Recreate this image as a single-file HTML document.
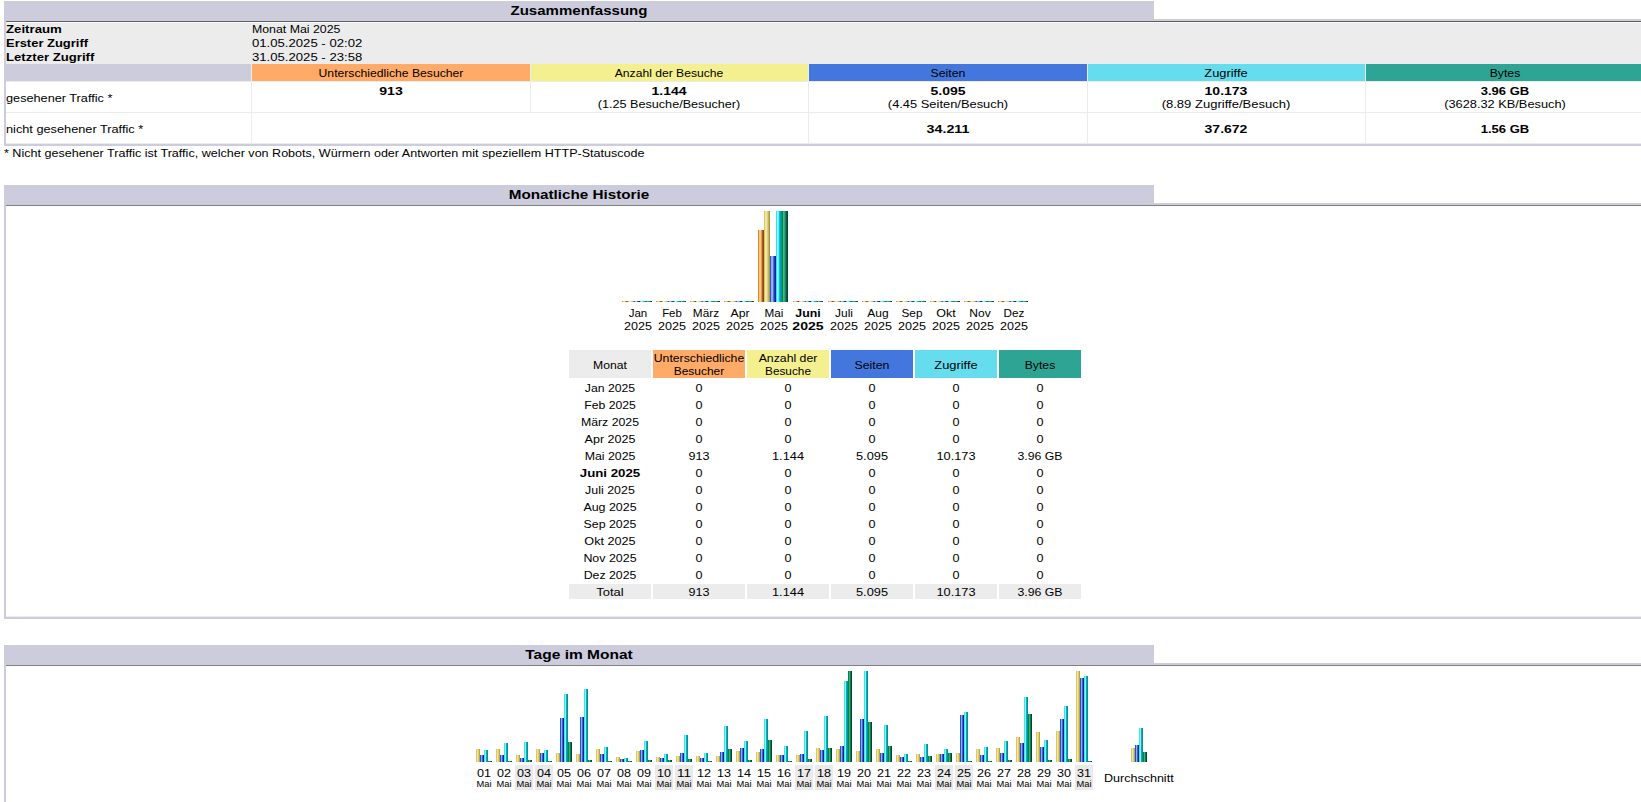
<!DOCTYPE html>
<html><head><meta charset="utf-8"><title>AWStats</title>
<style>
html,body{margin:0;padding:0;background:#fff;width:1641px;height:802px;overflow:hidden;position:relative}
i{position:absolute;display:block}
b{position:absolute;display:block;white-space:pre;color:#000;font-family:"Liberation Sans",sans-serif;font-weight:normal}
.t11{font-size:11px;line-height:13px}
.t11b{font-size:11px;line-height:13px;font-weight:bold}
.t13b{font-size:13px;line-height:16px;font-weight:bold}
.t9{font-size:9px;line-height:11px}
</style></head><body>
<i style="left:4px;top:1px;width:1150px;height:18px;background:#CCCCDD"></i>
<b class="t13b" style="left:278.5px;top:3px;width:600px;text-align:center;transform:scaleX(1.156327788859399);transform-origin:50% 0">Zusammenfassung</b>
<i style="left:4px;top:19px;width:1637px;height:127px;background:#CCCCDD"></i>
<i style="left:6px;top:21px;width:1635px;height:1px;background:#606060"></i>
<i style="left:6px;top:22px;width:1635px;height:1px;background:#F8F8F8"></i>
<i style="left:6px;top:23px;width:1635px;height:41px;background:#ECECEC"></i>
<i style="left:6px;top:64px;width:1635px;height:80px;background:#ECECEC"></i>
<i style="left:6px;top:64px;width:245px;height:17px;background:#CCCCDD"></i>
<i style="left:252px;top:64px;width:278px;height:17px;background:#FFAA66"></i>
<i style="left:531px;top:64px;width:277px;height:17px;background:#F4F090"></i>
<i style="left:809px;top:64px;width:278px;height:17px;background:#4477DD"></i>
<i style="left:1088px;top:64px;width:277px;height:17px;background:#66DDEE"></i>
<i style="left:1366px;top:64px;width:280px;height:17px;background:#2EA495"></i>
<i style="left:6px;top:82px;width:245px;height:30px;background:#FFFFFF"></i>
<i style="left:252px;top:82px;width:278px;height:30px;background:#FFFFFF"></i>
<i style="left:531px;top:82px;width:277px;height:30px;background:#FFFFFF"></i>
<i style="left:809px;top:82px;width:278px;height:30px;background:#FFFFFF"></i>
<i style="left:1088px;top:82px;width:277px;height:30px;background:#FFFFFF"></i>
<i style="left:1366px;top:82px;width:280px;height:30px;background:#FFFFFF"></i>
<i style="left:6px;top:113px;width:245px;height:30px;background:#FFFFFF"></i>
<i style="left:252px;top:113px;width:556px;height:30px;background:#FFFFFF"></i>
<i style="left:809px;top:113px;width:278px;height:30px;background:#FFFFFF"></i>
<i style="left:1088px;top:113px;width:277px;height:30px;background:#FFFFFF"></i>
<i style="left:1366px;top:113px;width:280px;height:30px;background:#FFFFFF"></i>
<b class="t11b" style="left:6px;top:23px;transform:scaleX(1.2017447971410553);transform-origin:0 0">Zeitraum</b>
<b class="t11b" style="left:6px;top:37px;transform:scaleX(1.1770077084793273);transform-origin:0 0">Erster Zugriff</b>
<b class="t11b" style="left:6px;top:51px;transform:scaleX(1.193836177294099);transform-origin:0 0">Letzter Zugriff</b>
<b class="t11" style="left:252px;top:23px;transform:scaleX(1.1205368196899916);transform-origin:0 0">Monat Mai 2025</b>
<b class="t11" style="left:252px;top:37px;transform:scaleX(1.1935761869514645);transform-origin:0 0">01.05.2025 - 02:02</b>
<b class="t11" style="left:252px;top:51px;transform:scaleX(1.1935761869514645);transform-origin:0 0">31.05.2025 - 23:58</b>
<b class="t11" style="left:90.5px;top:67px;width:600px;text-align:center;transform:scaleX(1.107003179531579);transform-origin:50% 0">Unterschiedliche Besucher</b>
<b class="t11" style="left:369.0px;top:67px;width:600px;text-align:center;transform:scaleX(1.1012656972245918);transform-origin:50% 0">Anzahl der Besuche</b>
<b class="t11" style="left:647.5px;top:67px;width:600px;text-align:center;transform:scaleX(1.1197006700482184);transform-origin:50% 0">Seiten</b>
<b class="t11" style="left:926.0px;top:67px;width:600px;text-align:center;transform:scaleX(1.166552577536728);transform-origin:50% 0">Zugriffe</b>
<b class="t11" style="left:1205.0px;top:67px;width:600px;text-align:center;transform:scaleX(1.1087072270339344);transform-origin:50% 0">Bytes</b>
<b class="t11b" style="left:90.5px;top:85px;width:600px;text-align:center;transform:scaleX(1.2766602809706258);transform-origin:50% 0">913</b>
<b class="t11b" style="left:369.0px;top:85px;width:600px;text-align:center;transform:scaleX(1.271677428510608);transform-origin:50% 0">1.144</b>
<b class="t11" style="left:369.0px;top:98px;width:600px;text-align:center;transform:scaleX(1.1476326845310214);transform-origin:50% 0">(1.25&nbsp;Besuche/Besucher)</b>
<b class="t11b" style="left:647.5px;top:85px;width:600px;text-align:center;transform:scaleX(1.271677428510608);transform-origin:50% 0">5.095</b>
<b class="t11" style="left:647.5px;top:98px;width:600px;text-align:center;transform:scaleX(1.1709603209308517);transform-origin:50% 0">(4.45&nbsp;Seiten/Besuch)</b>
<b class="t11b" style="left:926.0px;top:85px;width:600px;text-align:center;transform:scaleX(1.2725834542815675);transform-origin:50% 0">10.173</b>
<b class="t11" style="left:926.0px;top:98px;width:600px;text-align:center;transform:scaleX(1.1841726748053722);transform-origin:50% 0">(8.89&nbsp;Zugriffe/Besuch)</b>
<b class="t11b" style="left:1205.0px;top:85px;width:600px;text-align:center;transform:scaleX(1.1826547153618767);transform-origin:50% 0">3.96 GB</b>
<b class="t11" style="left:1205.0px;top:98px;width:600px;text-align:center;transform:scaleX(1.1622959393328103);transform-origin:50% 0">(3628.32&nbsp;KB/Besuch)</b>
<b class="t11" style="left:6px;top:92px;transform:scaleX(1.154568581725673);transform-origin:0 0">gesehener Traffic *</b>
<b class="t11" style="left:6px;top:123px;transform:scaleX(1.158174036384028);transform-origin:0 0">nicht gesehener Traffic *</b>
<b class="t11b" style="left:647.5px;top:123px;width:600px;text-align:center;transform:scaleX(1.2959826179496274);transform-origin:50% 0">34.211</b>
<b class="t11b" style="left:926.0px;top:123px;width:600px;text-align:center;transform:scaleX(1.2725834542815675);transform-origin:50% 0">37.672</b>
<b class="t11b" style="left:1205.0px;top:123px;width:600px;text-align:center;transform:scaleX(1.1826547153618767);transform-origin:50% 0">1.56 GB</b>
<b class="t11" style="left:4px;top:147px;transform:scaleX(1.1408809122914434);transform-origin:0 0">* Nicht gesehener Traffic ist Traffic, welcher von Robots, Würmern oder Antworten mit speziellem HTTP-Statuscode</b>
<i style="left:4px;top:185px;width:1150px;height:18px;background:#CCCCDD"></i>
<b class="t13b" style="left:278.5px;top:187px;width:600px;text-align:center;transform:scaleX(1.172265656812444);transform-origin:50% 0">Monatliche Historie</b>
<i style="left:4px;top:203px;width:1637px;height:416px;background:#CCCCDD"></i>
<i style="left:6px;top:205px;width:1635px;height:1px;background:#808080"></i>
<i style="left:6px;top:206px;width:1635px;height:411px;background:#FFFFFF"></i>
<i style="left:6px;top:616px;width:1635px;height:1px;background:#ECECEC"></i>
<i style="left:622px;top:301px;width:6px;height:1px;background:linear-gradient(90deg,#e38a1f 0.00% 16.67%,#ffc57e 16.67% 33.33%,#f3c78e 33.33% 50.00%,#d99d5c 50.00% 66.67%,#aa5a1c 66.67% 83.33%,#964306 83.33% 100.00%)"></i>
<i style="left:628px;top:301px;width:6px;height:1px;background:linear-gradient(90deg,#d9c95c 0.00% 16.67%,#f1e89c 16.67% 33.33%,#ebe2ad 33.33% 50.00%,#d9d08c 50.00% 66.67%,#c4b45c 66.67% 83.33%,#ab9b3d 83.33% 100.00%)"></i>
<i style="left:634px;top:301px;width:6px;height:1px;background:linear-gradient(90deg,#1f52fa 0.00% 16.67%,#8fb0ff 16.67% 33.33%,#9cb6f2 33.33% 50.00%,#4d6fdf 50.00% 66.67%,#1240bf 66.67% 83.33%,#04219c 83.33% 100.00%)"></i>
<i style="left:640px;top:301px;width:6px;height:1px;background:linear-gradient(90deg,#2ee4f4 0.00% 16.67%,#8efdff 16.67% 33.33%,#6eeef1 33.33% 50.00%,#10bfcf 50.00% 66.67%,#02a0b0 66.67% 83.33%,#058f99 83.33% 100.00%)"></i>
<i style="left:646px;top:301px;width:6px;height:1px;background:linear-gradient(90deg,#008a2a 0.00% 16.67%,#2fbf92 16.67% 33.33%,#3c9e8c 33.33% 50.00%,#1e7f5e 50.00% 66.67%,#055f3e 66.67% 83.33%,#034a2a 83.33% 100.00%)"></i>
<b class="t11" style="left:337.5px;top:307px;width:600px;text-align:center;transform:scaleX(1.042455947136564);transform-origin:50% 0">Jan</b>
<b class="t11" style="left:337.5px;top:320px;width:600px;text-align:center;transform:scaleX(1.1431992337164751);transform-origin:50% 0">2025</b>
<i style="left:656px;top:301px;width:6px;height:1px;background:linear-gradient(90deg,#e38a1f 0.00% 16.67%,#ffc57e 16.67% 33.33%,#f3c78e 33.33% 50.00%,#d99d5c 50.00% 66.67%,#aa5a1c 66.67% 83.33%,#964306 83.33% 100.00%)"></i>
<i style="left:662px;top:301px;width:6px;height:1px;background:linear-gradient(90deg,#d9c95c 0.00% 16.67%,#f1e89c 16.67% 33.33%,#ebe2ad 33.33% 50.00%,#d9d08c 50.00% 66.67%,#c4b45c 66.67% 83.33%,#ab9b3d 83.33% 100.00%)"></i>
<i style="left:668px;top:301px;width:6px;height:1px;background:linear-gradient(90deg,#1f52fa 0.00% 16.67%,#8fb0ff 16.67% 33.33%,#9cb6f2 33.33% 50.00%,#4d6fdf 50.00% 66.67%,#1240bf 66.67% 83.33%,#04219c 83.33% 100.00%)"></i>
<i style="left:674px;top:301px;width:6px;height:1px;background:linear-gradient(90deg,#2ee4f4 0.00% 16.67%,#8efdff 16.67% 33.33%,#6eeef1 33.33% 50.00%,#10bfcf 50.00% 66.67%,#02a0b0 66.67% 83.33%,#058f99 83.33% 100.00%)"></i>
<i style="left:680px;top:301px;width:6px;height:1px;background:linear-gradient(90deg,#008a2a 0.00% 16.67%,#2fbf92 16.67% 33.33%,#3c9e8c 33.33% 50.00%,#1e7f5e 50.00% 66.67%,#055f3e 66.67% 83.33%,#034a2a 83.33% 100.00%)"></i>
<b class="t11" style="left:371.5px;top:307px;width:600px;text-align:center;transform:scaleX(1.0408852019785655);transform-origin:50% 0">Feb</b>
<b class="t11" style="left:371.5px;top:320px;width:600px;text-align:center;transform:scaleX(1.1431992337164751);transform-origin:50% 0">2025</b>
<i style="left:690px;top:301px;width:6px;height:1px;background:linear-gradient(90deg,#e38a1f 0.00% 16.67%,#ffc57e 16.67% 33.33%,#f3c78e 33.33% 50.00%,#d99d5c 50.00% 66.67%,#aa5a1c 66.67% 83.33%,#964306 83.33% 100.00%)"></i>
<i style="left:696px;top:301px;width:6px;height:1px;background:linear-gradient(90deg,#d9c95c 0.00% 16.67%,#f1e89c 16.67% 33.33%,#ebe2ad 33.33% 50.00%,#d9d08c 50.00% 66.67%,#c4b45c 66.67% 83.33%,#ab9b3d 83.33% 100.00%)"></i>
<i style="left:702px;top:301px;width:6px;height:1px;background:linear-gradient(90deg,#1f52fa 0.00% 16.67%,#8fb0ff 16.67% 33.33%,#9cb6f2 33.33% 50.00%,#4d6fdf 50.00% 66.67%,#1240bf 66.67% 83.33%,#04219c 83.33% 100.00%)"></i>
<i style="left:708px;top:301px;width:6px;height:1px;background:linear-gradient(90deg,#2ee4f4 0.00% 16.67%,#8efdff 16.67% 33.33%,#6eeef1 33.33% 50.00%,#10bfcf 50.00% 66.67%,#02a0b0 66.67% 83.33%,#058f99 83.33% 100.00%)"></i>
<i style="left:714px;top:301px;width:6px;height:1px;background:linear-gradient(90deg,#008a2a 0.00% 16.67%,#2fbf92 16.67% 33.33%,#3c9e8c 33.33% 50.00%,#1e7f5e 50.00% 66.67%,#055f3e 66.67% 83.33%,#034a2a 83.33% 100.00%)"></i>
<b class="t11" style="left:405.5px;top:307px;width:600px;text-align:center;transform:scaleX(1.0746444550974752);transform-origin:50% 0">März</b>
<b class="t11" style="left:405.5px;top:320px;width:600px;text-align:center;transform:scaleX(1.1431992337164751);transform-origin:50% 0">2025</b>
<i style="left:724px;top:301px;width:6px;height:1px;background:linear-gradient(90deg,#e38a1f 0.00% 16.67%,#ffc57e 16.67% 33.33%,#f3c78e 33.33% 50.00%,#d99d5c 50.00% 66.67%,#aa5a1c 66.67% 83.33%,#964306 83.33% 100.00%)"></i>
<i style="left:730px;top:301px;width:6px;height:1px;background:linear-gradient(90deg,#d9c95c 0.00% 16.67%,#f1e89c 16.67% 33.33%,#ebe2ad 33.33% 50.00%,#d9d08c 50.00% 66.67%,#c4b45c 66.67% 83.33%,#ab9b3d 83.33% 100.00%)"></i>
<i style="left:736px;top:301px;width:6px;height:1px;background:linear-gradient(90deg,#1f52fa 0.00% 16.67%,#8fb0ff 16.67% 33.33%,#9cb6f2 33.33% 50.00%,#4d6fdf 50.00% 66.67%,#1240bf 66.67% 83.33%,#04219c 83.33% 100.00%)"></i>
<i style="left:742px;top:301px;width:6px;height:1px;background:linear-gradient(90deg,#2ee4f4 0.00% 16.67%,#8efdff 16.67% 33.33%,#6eeef1 33.33% 50.00%,#10bfcf 50.00% 66.67%,#02a0b0 66.67% 83.33%,#058f99 83.33% 100.00%)"></i>
<i style="left:748px;top:301px;width:6px;height:1px;background:linear-gradient(90deg,#008a2a 0.00% 16.67%,#2fbf92 16.67% 33.33%,#3c9e8c 33.33% 50.00%,#1e7f5e 50.00% 66.67%,#055f3e 66.67% 83.33%,#034a2a 83.33% 100.00%)"></i>
<b class="t11" style="left:439.5px;top:307px;width:600px;text-align:center;transform:scaleX(1.1122361665715916);transform-origin:50% 0">Apr</b>
<b class="t11" style="left:439.5px;top:320px;width:600px;text-align:center;transform:scaleX(1.1431992337164751);transform-origin:50% 0">2025</b>
<i style="left:758px;top:230px;width:6px;height:72px;background:linear-gradient(90deg,#e38a1f 0.00% 16.67%,#ffc57e 16.67% 33.33%,#f3c78e 33.33% 50.00%,#d99d5c 50.00% 66.67%,#aa5a1c 66.67% 83.33%,#964306 83.33% 100.00%)"></i>
<i style="left:764px;top:211px;width:6px;height:91px;background:linear-gradient(90deg,#d9c95c 0.00% 16.67%,#f1e89c 16.67% 33.33%,#ebe2ad 33.33% 50.00%,#d9d08c 50.00% 66.67%,#c4b45c 66.67% 83.33%,#ab9b3d 83.33% 100.00%)"></i>
<i style="left:770px;top:256px;width:6px;height:46px;background:linear-gradient(90deg,#1f52fa 0.00% 16.67%,#8fb0ff 16.67% 33.33%,#9cb6f2 33.33% 50.00%,#4d6fdf 50.00% 66.67%,#1240bf 66.67% 83.33%,#04219c 83.33% 100.00%)"></i>
<i style="left:776px;top:211px;width:6px;height:91px;background:linear-gradient(90deg,#2ee4f4 0.00% 16.67%,#8efdff 16.67% 33.33%,#6eeef1 33.33% 50.00%,#10bfcf 50.00% 66.67%,#02a0b0 66.67% 83.33%,#058f99 83.33% 100.00%)"></i>
<i style="left:782px;top:211px;width:6px;height:91px;background:linear-gradient(90deg,#008a2a 0.00% 16.67%,#2fbf92 16.67% 33.33%,#3c9e8c 33.33% 50.00%,#1e7f5e 50.00% 66.67%,#055f3e 66.67% 83.33%,#034a2a 83.33% 100.00%)"></i>
<b class="t11" style="left:473.5px;top:307px;width:600px;text-align:center;transform:scaleX(1.0642424242424242);transform-origin:50% 0">Mai</b>
<b class="t11" style="left:473.5px;top:320px;width:600px;text-align:center;transform:scaleX(1.1431992337164751);transform-origin:50% 0">2025</b>
<i style="left:793px;top:301px;width:6px;height:1px;background:linear-gradient(90deg,#e38a1f 0.00% 16.67%,#ffc57e 16.67% 33.33%,#f3c78e 33.33% 50.00%,#d99d5c 50.00% 66.67%,#aa5a1c 66.67% 83.33%,#964306 83.33% 100.00%)"></i>
<i style="left:799px;top:301px;width:6px;height:1px;background:linear-gradient(90deg,#d9c95c 0.00% 16.67%,#f1e89c 16.67% 33.33%,#ebe2ad 33.33% 50.00%,#d9d08c 50.00% 66.67%,#c4b45c 66.67% 83.33%,#ab9b3d 83.33% 100.00%)"></i>
<i style="left:805px;top:301px;width:6px;height:1px;background:linear-gradient(90deg,#1f52fa 0.00% 16.67%,#8fb0ff 16.67% 33.33%,#9cb6f2 33.33% 50.00%,#4d6fdf 50.00% 66.67%,#1240bf 66.67% 83.33%,#04219c 83.33% 100.00%)"></i>
<i style="left:811px;top:301px;width:6px;height:1px;background:linear-gradient(90deg,#2ee4f4 0.00% 16.67%,#8efdff 16.67% 33.33%,#6eeef1 33.33% 50.00%,#10bfcf 50.00% 66.67%,#02a0b0 66.67% 83.33%,#058f99 83.33% 100.00%)"></i>
<i style="left:817px;top:301px;width:6px;height:1px;background:linear-gradient(90deg,#008a2a 0.00% 16.67%,#2fbf92 16.67% 33.33%,#3c9e8c 33.33% 50.00%,#1e7f5e 50.00% 66.67%,#055f3e 66.67% 83.33%,#034a2a 83.33% 100.00%)"></i>
<b class="t11b" style="left:508.0px;top:307px;width:600px;text-align:center;transform:scaleX(1.120000863781636);transform-origin:50% 0">Juni</b>
<b class="t11b" style="left:508.0px;top:320px;width:600px;text-align:center;transform:scaleX(1.2766602809706258);transform-origin:50% 0">2025</b>
<i style="left:828px;top:301px;width:6px;height:1px;background:linear-gradient(90deg,#e38a1f 0.00% 16.67%,#ffc57e 16.67% 33.33%,#f3c78e 33.33% 50.00%,#d99d5c 50.00% 66.67%,#aa5a1c 66.67% 83.33%,#964306 83.33% 100.00%)"></i>
<i style="left:834px;top:301px;width:6px;height:1px;background:linear-gradient(90deg,#d9c95c 0.00% 16.67%,#f1e89c 16.67% 33.33%,#ebe2ad 33.33% 50.00%,#d9d08c 50.00% 66.67%,#c4b45c 66.67% 83.33%,#ab9b3d 83.33% 100.00%)"></i>
<i style="left:840px;top:301px;width:6px;height:1px;background:linear-gradient(90deg,#1f52fa 0.00% 16.67%,#8fb0ff 16.67% 33.33%,#9cb6f2 33.33% 50.00%,#4d6fdf 50.00% 66.67%,#1240bf 66.67% 83.33%,#04219c 83.33% 100.00%)"></i>
<i style="left:846px;top:301px;width:6px;height:1px;background:linear-gradient(90deg,#2ee4f4 0.00% 16.67%,#8efdff 16.67% 33.33%,#6eeef1 33.33% 50.00%,#10bfcf 50.00% 66.67%,#02a0b0 66.67% 83.33%,#058f99 83.33% 100.00%)"></i>
<i style="left:852px;top:301px;width:6px;height:1px;background:linear-gradient(90deg,#008a2a 0.00% 16.67%,#2fbf92 16.67% 33.33%,#3c9e8c 33.33% 50.00%,#1e7f5e 50.00% 66.67%,#055f3e 66.67% 83.33%,#034a2a 83.33% 100.00%)"></i>
<b class="t11" style="left:543.5px;top:307px;width:600px;text-align:center;transform:scaleX(1.0837278106508876);transform-origin:50% 0">Juli</b>
<b class="t11" style="left:543.5px;top:320px;width:600px;text-align:center;transform:scaleX(1.1431992337164751);transform-origin:50% 0">2025</b>
<i style="left:862px;top:301px;width:6px;height:1px;background:linear-gradient(90deg,#e38a1f 0.00% 16.67%,#ffc57e 16.67% 33.33%,#f3c78e 33.33% 50.00%,#d99d5c 50.00% 66.67%,#aa5a1c 66.67% 83.33%,#964306 83.33% 100.00%)"></i>
<i style="left:868px;top:301px;width:6px;height:1px;background:linear-gradient(90deg,#d9c95c 0.00% 16.67%,#f1e89c 16.67% 33.33%,#ebe2ad 33.33% 50.00%,#d9d08c 50.00% 66.67%,#c4b45c 66.67% 83.33%,#ab9b3d 83.33% 100.00%)"></i>
<i style="left:874px;top:301px;width:6px;height:1px;background:linear-gradient(90deg,#1f52fa 0.00% 16.67%,#8fb0ff 16.67% 33.33%,#9cb6f2 33.33% 50.00%,#4d6fdf 50.00% 66.67%,#1240bf 66.67% 83.33%,#04219c 83.33% 100.00%)"></i>
<i style="left:880px;top:301px;width:6px;height:1px;background:linear-gradient(90deg,#2ee4f4 0.00% 16.67%,#8efdff 16.67% 33.33%,#6eeef1 33.33% 50.00%,#10bfcf 50.00% 66.67%,#02a0b0 66.67% 83.33%,#058f99 83.33% 100.00%)"></i>
<i style="left:886px;top:301px;width:6px;height:1px;background:linear-gradient(90deg,#008a2a 0.00% 16.67%,#2fbf92 16.67% 33.33%,#3c9e8c 33.33% 50.00%,#1e7f5e 50.00% 66.67%,#055f3e 66.67% 83.33%,#034a2a 83.33% 100.00%)"></i>
<b class="t11" style="left:577.5px;top:307px;width:600px;text-align:center;transform:scaleX(1.088913282107574);transform-origin:50% 0">Aug</b>
<b class="t11" style="left:577.5px;top:320px;width:600px;text-align:center;transform:scaleX(1.1431992337164751);transform-origin:50% 0">2025</b>
<i style="left:896px;top:301px;width:6px;height:1px;background:linear-gradient(90deg,#e38a1f 0.00% 16.67%,#ffc57e 16.67% 33.33%,#f3c78e 33.33% 50.00%,#d99d5c 50.00% 66.67%,#aa5a1c 66.67% 83.33%,#964306 83.33% 100.00%)"></i>
<i style="left:902px;top:301px;width:6px;height:1px;background:linear-gradient(90deg,#d9c95c 0.00% 16.67%,#f1e89c 16.67% 33.33%,#ebe2ad 33.33% 50.00%,#d9d08c 50.00% 66.67%,#c4b45c 66.67% 83.33%,#ab9b3d 83.33% 100.00%)"></i>
<i style="left:908px;top:301px;width:6px;height:1px;background:linear-gradient(90deg,#1f52fa 0.00% 16.67%,#8fb0ff 16.67% 33.33%,#9cb6f2 33.33% 50.00%,#4d6fdf 50.00% 66.67%,#1240bf 66.67% 83.33%,#04219c 83.33% 100.00%)"></i>
<i style="left:914px;top:301px;width:6px;height:1px;background:linear-gradient(90deg,#2ee4f4 0.00% 16.67%,#8efdff 16.67% 33.33%,#6eeef1 33.33% 50.00%,#10bfcf 50.00% 66.67%,#02a0b0 66.67% 83.33%,#058f99 83.33% 100.00%)"></i>
<i style="left:920px;top:301px;width:6px;height:1px;background:linear-gradient(90deg,#008a2a 0.00% 16.67%,#2fbf92 16.67% 33.33%,#3c9e8c 33.33% 50.00%,#1e7f5e 50.00% 66.67%,#055f3e 66.67% 83.33%,#034a2a 83.33% 100.00%)"></i>
<b class="t11" style="left:611.5px;top:307px;width:600px;text-align:center;transform:scaleX(1.070252469813392);transform-origin:50% 0">Sep</b>
<b class="t11" style="left:611.5px;top:320px;width:600px;text-align:center;transform:scaleX(1.1431992337164751);transform-origin:50% 0">2025</b>
<i style="left:930px;top:301px;width:6px;height:1px;background:linear-gradient(90deg,#e38a1f 0.00% 16.67%,#ffc57e 16.67% 33.33%,#f3c78e 33.33% 50.00%,#d99d5c 50.00% 66.67%,#aa5a1c 66.67% 83.33%,#964306 83.33% 100.00%)"></i>
<i style="left:936px;top:301px;width:6px;height:1px;background:linear-gradient(90deg,#d9c95c 0.00% 16.67%,#f1e89c 16.67% 33.33%,#ebe2ad 33.33% 50.00%,#d9d08c 50.00% 66.67%,#c4b45c 66.67% 83.33%,#ab9b3d 83.33% 100.00%)"></i>
<i style="left:942px;top:301px;width:6px;height:1px;background:linear-gradient(90deg,#1f52fa 0.00% 16.67%,#8fb0ff 16.67% 33.33%,#9cb6f2 33.33% 50.00%,#4d6fdf 50.00% 66.67%,#1240bf 66.67% 83.33%,#04219c 83.33% 100.00%)"></i>
<i style="left:948px;top:301px;width:6px;height:1px;background:linear-gradient(90deg,#2ee4f4 0.00% 16.67%,#8efdff 16.67% 33.33%,#6eeef1 33.33% 50.00%,#10bfcf 50.00% 66.67%,#02a0b0 66.67% 83.33%,#058f99 83.33% 100.00%)"></i>
<i style="left:954px;top:301px;width:6px;height:1px;background:linear-gradient(90deg,#008a2a 0.00% 16.67%,#2fbf92 16.67% 33.33%,#3c9e8c 33.33% 50.00%,#1e7f5e 50.00% 66.67%,#055f3e 66.67% 83.33%,#034a2a 83.33% 100.00%)"></i>
<b class="t11" style="left:645.5px;top:307px;width:600px;text-align:center;transform:scaleX(1.1355284181693677);transform-origin:50% 0">Okt</b>
<b class="t11" style="left:645.5px;top:320px;width:600px;text-align:center;transform:scaleX(1.1431992337164751);transform-origin:50% 0">2025</b>
<i style="left:964px;top:301px;width:6px;height:1px;background:linear-gradient(90deg,#e38a1f 0.00% 16.67%,#ffc57e 16.67% 33.33%,#f3c78e 33.33% 50.00%,#d99d5c 50.00% 66.67%,#aa5a1c 66.67% 83.33%,#964306 83.33% 100.00%)"></i>
<i style="left:970px;top:301px;width:6px;height:1px;background:linear-gradient(90deg,#d9c95c 0.00% 16.67%,#f1e89c 16.67% 33.33%,#ebe2ad 33.33% 50.00%,#d9d08c 50.00% 66.67%,#c4b45c 66.67% 83.33%,#ab9b3d 83.33% 100.00%)"></i>
<i style="left:976px;top:301px;width:6px;height:1px;background:linear-gradient(90deg,#1f52fa 0.00% 16.67%,#8fb0ff 16.67% 33.33%,#9cb6f2 33.33% 50.00%,#4d6fdf 50.00% 66.67%,#1240bf 66.67% 83.33%,#04219c 83.33% 100.00%)"></i>
<i style="left:982px;top:301px;width:6px;height:1px;background:linear-gradient(90deg,#2ee4f4 0.00% 16.67%,#8efdff 16.67% 33.33%,#6eeef1 33.33% 50.00%,#10bfcf 50.00% 66.67%,#02a0b0 66.67% 83.33%,#058f99 83.33% 100.00%)"></i>
<i style="left:988px;top:301px;width:6px;height:1px;background:linear-gradient(90deg,#008a2a 0.00% 16.67%,#2fbf92 16.67% 33.33%,#3c9e8c 33.33% 50.00%,#1e7f5e 50.00% 66.67%,#055f3e 66.67% 83.33%,#034a2a 83.33% 100.00%)"></i>
<b class="t11" style="left:679.5px;top:307px;width:600px;text-align:center;transform:scaleX(1.0920369445831253);transform-origin:50% 0">Nov</b>
<b class="t11" style="left:679.5px;top:320px;width:600px;text-align:center;transform:scaleX(1.1431992337164751);transform-origin:50% 0">2025</b>
<i style="left:998px;top:301px;width:6px;height:1px;background:linear-gradient(90deg,#e38a1f 0.00% 16.67%,#ffc57e 16.67% 33.33%,#f3c78e 33.33% 50.00%,#d99d5c 50.00% 66.67%,#aa5a1c 66.67% 83.33%,#964306 83.33% 100.00%)"></i>
<i style="left:1004px;top:301px;width:6px;height:1px;background:linear-gradient(90deg,#d9c95c 0.00% 16.67%,#f1e89c 16.67% 33.33%,#ebe2ad 33.33% 50.00%,#d9d08c 50.00% 66.67%,#c4b45c 66.67% 83.33%,#ab9b3d 83.33% 100.00%)"></i>
<i style="left:1010px;top:301px;width:6px;height:1px;background:linear-gradient(90deg,#1f52fa 0.00% 16.67%,#8fb0ff 16.67% 33.33%,#9cb6f2 33.33% 50.00%,#4d6fdf 50.00% 66.67%,#1240bf 66.67% 83.33%,#04219c 83.33% 100.00%)"></i>
<i style="left:1016px;top:301px;width:6px;height:1px;background:linear-gradient(90deg,#2ee4f4 0.00% 16.67%,#8efdff 16.67% 33.33%,#6eeef1 33.33% 50.00%,#10bfcf 50.00% 66.67%,#02a0b0 66.67% 83.33%,#058f99 83.33% 100.00%)"></i>
<i style="left:1022px;top:301px;width:6px;height:1px;background:linear-gradient(90deg,#008a2a 0.00% 16.67%,#2fbf92 16.67% 33.33%,#3c9e8c 33.33% 50.00%,#1e7f5e 50.00% 66.67%,#055f3e 66.67% 83.33%,#034a2a 83.33% 100.00%)"></i>
<b class="t11" style="left:713.5px;top:307px;width:600px;text-align:center;transform:scaleX(1.0621068397403894);transform-origin:50% 0">Dez</b>
<b class="t11" style="left:713.5px;top:320px;width:600px;text-align:center;transform:scaleX(1.1431992337164751);transform-origin:50% 0">2025</b>
<i style="left:569px;top:350px;width:82px;height:28px;background:#ECECEC"></i>
<i style="left:653px;top:350px;width:92px;height:28px;background:#FFAA66"></i>
<i style="left:747px;top:350px;width:82px;height:28px;background:#F4F090"></i>
<i style="left:831px;top:350px;width:82px;height:28px;background:#4477DD"></i>
<i style="left:915px;top:350px;width:82px;height:28px;background:#66DDEE"></i>
<i style="left:999px;top:350px;width:82px;height:28px;background:#2EA495"></i>
<b class="t11" style="left:310.0px;top:359px;width:600px;text-align:center;transform:scaleX(1.1061138439915672);transform-origin:50% 0">Monat</b>
<b class="t11" style="left:399.0px;top:352px;width:600px;text-align:center;transform:scaleX(1.1122727163548147);transform-origin:50% 0">Unterschiedliche</b>
<b class="t11" style="left:399.0px;top:365px;width:600px;text-align:center;transform:scaleX(1.087378640776699);transform-origin:50% 0">Besucher</b>
<b class="t11" style="left:488.0px;top:352px;width:600px;text-align:center;transform:scaleX(1.1160352831940576);transform-origin:50% 0">Anzahl der</b>
<b class="t11" style="left:488.0px;top:365px;width:600px;text-align:center;transform:scaleX(1.0714171647579505);transform-origin:50% 0">Besuche</b>
<b class="t11" style="left:572.0px;top:359px;width:600px;text-align:center;transform:scaleX(1.1197006700482184);transform-origin:50% 0">Seiten</b>
<b class="t11" style="left:656.0px;top:359px;width:600px;text-align:center;transform:scaleX(1.166552577536728);transform-origin:50% 0">Zugriffe</b>
<b class="t11" style="left:740.0px;top:359px;width:600px;text-align:center;transform:scaleX(1.1087072270339344);transform-origin:50% 0">Bytes</b>
<b class="t11" style="left:310.0px;top:382px;width:600px;text-align:center;transform:scaleX(1.1119621973848877);transform-origin:50% 0">Jan 2025</b>
<b class="t11" style="left:399.0px;top:382px;width:600px;text-align:center;transform:scaleX(1.1431992337164751);transform-origin:50% 0">0</b>
<b class="t11" style="left:488.0px;top:382px;width:600px;text-align:center;transform:scaleX(1.1431992337164751);transform-origin:50% 0">0</b>
<b class="t11" style="left:572.0px;top:382px;width:600px;text-align:center;transform:scaleX(1.1431992337164751);transform-origin:50% 0">0</b>
<b class="t11" style="left:656.0px;top:382px;width:600px;text-align:center;transform:scaleX(1.1431992337164751);transform-origin:50% 0">0</b>
<b class="t11" style="left:740.0px;top:382px;width:600px;text-align:center;transform:scaleX(1.1431992337164751);transform-origin:50% 0">0</b>
<b class="t11" style="left:310.0px;top:399px;width:600px;text-align:center;transform:scaleX(1.109499096524772);transform-origin:50% 0">Feb 2025</b>
<b class="t11" style="left:399.0px;top:399px;width:600px;text-align:center;transform:scaleX(1.1431992337164751);transform-origin:50% 0">0</b>
<b class="t11" style="left:488.0px;top:399px;width:600px;text-align:center;transform:scaleX(1.1431992337164751);transform-origin:50% 0">0</b>
<b class="t11" style="left:572.0px;top:399px;width:600px;text-align:center;transform:scaleX(1.1431992337164751);transform-origin:50% 0">0</b>
<b class="t11" style="left:656.0px;top:399px;width:600px;text-align:center;transform:scaleX(1.1431992337164751);transform-origin:50% 0">0</b>
<b class="t11" style="left:740.0px;top:399px;width:600px;text-align:center;transform:scaleX(1.1431992337164751);transform-origin:50% 0">0</b>
<b class="t11" style="left:310.0px;top:416px;width:600px;text-align:center;transform:scaleX(1.11812732534105);transform-origin:50% 0">März 2025</b>
<b class="t11" style="left:399.0px;top:416px;width:600px;text-align:center;transform:scaleX(1.1431992337164751);transform-origin:50% 0">0</b>
<b class="t11" style="left:488.0px;top:416px;width:600px;text-align:center;transform:scaleX(1.1431992337164751);transform-origin:50% 0">0</b>
<b class="t11" style="left:572.0px;top:416px;width:600px;text-align:center;transform:scaleX(1.1431992337164751);transform-origin:50% 0">0</b>
<b class="t11" style="left:656.0px;top:416px;width:600px;text-align:center;transform:scaleX(1.1431992337164751);transform-origin:50% 0">0</b>
<b class="t11" style="left:740.0px;top:416px;width:600px;text-align:center;transform:scaleX(1.1431992337164751);transform-origin:50% 0">0</b>
<b class="t11" style="left:310.0px;top:433px;width:600px;text-align:center;transform:scaleX(1.1396775745909529);transform-origin:50% 0">Apr 2025</b>
<b class="t11" style="left:399.0px;top:433px;width:600px;text-align:center;transform:scaleX(1.1431992337164751);transform-origin:50% 0">0</b>
<b class="t11" style="left:488.0px;top:433px;width:600px;text-align:center;transform:scaleX(1.1431992337164751);transform-origin:50% 0">0</b>
<b class="t11" style="left:572.0px;top:433px;width:600px;text-align:center;transform:scaleX(1.1431992337164751);transform-origin:50% 0">0</b>
<b class="t11" style="left:656.0px;top:433px;width:600px;text-align:center;transform:scaleX(1.1431992337164751);transform-origin:50% 0">0</b>
<b class="t11" style="left:740.0px;top:433px;width:600px;text-align:center;transform:scaleX(1.1431992337164751);transform-origin:50% 0">0</b>
<b class="t11" style="left:310.0px;top:450px;width:600px;text-align:center;transform:scaleX(1.120511049723757);transform-origin:50% 0">Mai 2025</b>
<b class="t11" style="left:399.0px;top:450px;width:600px;text-align:center;transform:scaleX(1.1431992337164751);transform-origin:50% 0">913</b>
<b class="t11" style="left:488.0px;top:450px;width:600px;text-align:center;transform:scaleX(1.1622081884623572);transform-origin:50% 0">1.144</b>
<b class="t11" style="left:572.0px;top:450px;width:600px;text-align:center;transform:scaleX(1.1622081884623572);transform-origin:50% 0">5.095</b>
<b class="t11" style="left:656.0px;top:450px;width:600px;text-align:center;transform:scaleX(1.1587518142235123);transform-origin:50% 0">10.173</b>
<b class="t11" style="left:740.0px;top:450px;width:600px;text-align:center;transform:scaleX(1.1132283197831978);transform-origin:50% 0">3.96 GB</b>
<b class="t11b" style="left:310.0px;top:467px;width:600px;text-align:center;transform:scaleX(1.2043435917413323);transform-origin:50% 0">Juni 2025</b>
<b class="t11" style="left:399.0px;top:467px;width:600px;text-align:center;transform:scaleX(1.1431992337164751);transform-origin:50% 0">0</b>
<b class="t11" style="left:488.0px;top:467px;width:600px;text-align:center;transform:scaleX(1.1431992337164751);transform-origin:50% 0">0</b>
<b class="t11" style="left:572.0px;top:467px;width:600px;text-align:center;transform:scaleX(1.1431992337164751);transform-origin:50% 0">0</b>
<b class="t11" style="left:656.0px;top:467px;width:600px;text-align:center;transform:scaleX(1.1431992337164751);transform-origin:50% 0">0</b>
<b class="t11" style="left:740.0px;top:467px;width:600px;text-align:center;transform:scaleX(1.1431992337164751);transform-origin:50% 0">0</b>
<b class="t11" style="left:310.0px;top:484px;width:600px;text-align:center;transform:scaleX(1.1293749722752073);transform-origin:50% 0">Juli 2025</b>
<b class="t11" style="left:399.0px;top:484px;width:600px;text-align:center;transform:scaleX(1.1431992337164751);transform-origin:50% 0">0</b>
<b class="t11" style="left:488.0px;top:484px;width:600px;text-align:center;transform:scaleX(1.1431992337164751);transform-origin:50% 0">0</b>
<b class="t11" style="left:572.0px;top:484px;width:600px;text-align:center;transform:scaleX(1.1431992337164751);transform-origin:50% 0">0</b>
<b class="t11" style="left:656.0px;top:484px;width:600px;text-align:center;transform:scaleX(1.1431992337164751);transform-origin:50% 0">0</b>
<b class="t11" style="left:740.0px;top:484px;width:600px;text-align:center;transform:scaleX(1.1431992337164751);transform-origin:50% 0">0</b>
<b class="t11" style="left:310.0px;top:501px;width:600px;text-align:center;transform:scaleX(1.1285560255453264);transform-origin:50% 0">Aug 2025</b>
<b class="t11" style="left:399.0px;top:501px;width:600px;text-align:center;transform:scaleX(1.1431992337164751);transform-origin:50% 0">0</b>
<b class="t11" style="left:488.0px;top:501px;width:600px;text-align:center;transform:scaleX(1.1431992337164751);transform-origin:50% 0">0</b>
<b class="t11" style="left:572.0px;top:501px;width:600px;text-align:center;transform:scaleX(1.1431992337164751);transform-origin:50% 0">0</b>
<b class="t11" style="left:656.0px;top:501px;width:600px;text-align:center;transform:scaleX(1.1431992337164751);transform-origin:50% 0">0</b>
<b class="t11" style="left:740.0px;top:501px;width:600px;text-align:center;transform:scaleX(1.1431992337164751);transform-origin:50% 0">0</b>
<b class="t11" style="left:310.0px;top:518px;width:600px;text-align:center;transform:scaleX(1.120801194326947);transform-origin:50% 0">Sep 2025</b>
<b class="t11" style="left:399.0px;top:518px;width:600px;text-align:center;transform:scaleX(1.1431992337164751);transform-origin:50% 0">0</b>
<b class="t11" style="left:488.0px;top:518px;width:600px;text-align:center;transform:scaleX(1.1431992337164751);transform-origin:50% 0">0</b>
<b class="t11" style="left:572.0px;top:518px;width:600px;text-align:center;transform:scaleX(1.1431992337164751);transform-origin:50% 0">0</b>
<b class="t11" style="left:656.0px;top:518px;width:600px;text-align:center;transform:scaleX(1.1431992337164751);transform-origin:50% 0">0</b>
<b class="t11" style="left:740.0px;top:518px;width:600px;text-align:center;transform:scaleX(1.1431992337164751);transform-origin:50% 0">0</b>
<b class="t11" style="left:310.0px;top:535px;width:600px;text-align:center;transform:scaleX(1.1486108072631809);transform-origin:50% 0">Okt 2025</b>
<b class="t11" style="left:399.0px;top:535px;width:600px;text-align:center;transform:scaleX(1.1431992337164751);transform-origin:50% 0">0</b>
<b class="t11" style="left:488.0px;top:535px;width:600px;text-align:center;transform:scaleX(1.1431992337164751);transform-origin:50% 0">0</b>
<b class="t11" style="left:572.0px;top:535px;width:600px;text-align:center;transform:scaleX(1.1431992337164751);transform-origin:50% 0">0</b>
<b class="t11" style="left:656.0px;top:535px;width:600px;text-align:center;transform:scaleX(1.1431992337164751);transform-origin:50% 0">0</b>
<b class="t11" style="left:740.0px;top:535px;width:600px;text-align:center;transform:scaleX(1.1431992337164751);transform-origin:50% 0">0</b>
<b class="t11" style="left:310.0px;top:552px;width:600px;text-align:center;transform:scaleX(1.1298635307781648);transform-origin:50% 0">Nov 2025</b>
<b class="t11" style="left:399.0px;top:552px;width:600px;text-align:center;transform:scaleX(1.1431992337164751);transform-origin:50% 0">0</b>
<b class="t11" style="left:488.0px;top:552px;width:600px;text-align:center;transform:scaleX(1.1431992337164751);transform-origin:50% 0">0</b>
<b class="t11" style="left:572.0px;top:552px;width:600px;text-align:center;transform:scaleX(1.1431992337164751);transform-origin:50% 0">0</b>
<b class="t11" style="left:656.0px;top:552px;width:600px;text-align:center;transform:scaleX(1.1431992337164751);transform-origin:50% 0">0</b>
<b class="t11" style="left:740.0px;top:552px;width:600px;text-align:center;transform:scaleX(1.1431992337164751);transform-origin:50% 0">0</b>
<b class="t11" style="left:310.0px;top:569px;width:600px;text-align:center;transform:scaleX(1.1174298987887838);transform-origin:50% 0">Dez 2025</b>
<b class="t11" style="left:399.0px;top:569px;width:600px;text-align:center;transform:scaleX(1.1431992337164751);transform-origin:50% 0">0</b>
<b class="t11" style="left:488.0px;top:569px;width:600px;text-align:center;transform:scaleX(1.1431992337164751);transform-origin:50% 0">0</b>
<b class="t11" style="left:572.0px;top:569px;width:600px;text-align:center;transform:scaleX(1.1431992337164751);transform-origin:50% 0">0</b>
<b class="t11" style="left:656.0px;top:569px;width:600px;text-align:center;transform:scaleX(1.1431992337164751);transform-origin:50% 0">0</b>
<b class="t11" style="left:740.0px;top:569px;width:600px;text-align:center;transform:scaleX(1.1431992337164751);transform-origin:50% 0">0</b>
<i style="left:569px;top:584px;width:82px;height:15px;background:#ECECEC"></i>
<i style="left:653px;top:584px;width:92px;height:15px;background:#ECECEC"></i>
<i style="left:747px;top:584px;width:82px;height:15px;background:#ECECEC"></i>
<i style="left:831px;top:584px;width:82px;height:15px;background:#ECECEC"></i>
<i style="left:915px;top:584px;width:82px;height:15px;background:#ECECEC"></i>
<i style="left:999px;top:584px;width:82px;height:15px;background:#ECECEC"></i>
<b class="t11" style="left:310.0px;top:586px;width:600px;text-align:center;transform:scaleX(1.176193678547411);transform-origin:50% 0">Total</b>
<b class="t11" style="left:399.0px;top:586px;width:600px;text-align:center;transform:scaleX(1.1431992337164751);transform-origin:50% 0">913</b>
<b class="t11" style="left:488.0px;top:586px;width:600px;text-align:center;transform:scaleX(1.1622081884623572);transform-origin:50% 0">1.144</b>
<b class="t11" style="left:572.0px;top:586px;width:600px;text-align:center;transform:scaleX(1.1622081884623572);transform-origin:50% 0">5.095</b>
<b class="t11" style="left:656.0px;top:586px;width:600px;text-align:center;transform:scaleX(1.1587518142235123);transform-origin:50% 0">10.173</b>
<b class="t11" style="left:740.0px;top:586px;width:600px;text-align:center;transform:scaleX(1.1132283197831978);transform-origin:50% 0">3.96 GB</b>
<i style="left:4px;top:645px;width:1150px;height:18px;background:#CCCCDD"></i>
<b class="t13b" style="left:278.5px;top:647px;width:600px;text-align:center;transform:scaleX(1.1926230397154198);transform-origin:50% 0">Tage im Monat</b>
<i style="left:4px;top:663px;width:1637px;height:139px;background:#CCCCDD"></i>
<i style="left:6px;top:665px;width:1635px;height:1px;background:#808080"></i>
<i style="left:6px;top:666px;width:1635px;height:136px;background:#FFFFFF"></i>
<i style="left:476px;top:749px;width:4px;height:13px;background:linear-gradient(90deg,#d8c868 0.00% 25.00%,#f0e4a0 25.00% 50.00%,#d8cc8c 50.00% 75.00%,#c8a818 75.00% 100.00%)"></i>
<i style="left:480px;top:755px;width:4px;height:7px;background:linear-gradient(90deg,#1050ff 0.00% 25.00%,#90b0f8 25.00% 50.00%,#4060c8 50.00% 75.00%,#062494 75.00% 100.00%)"></i>
<i style="left:484px;top:750px;width:4px;height:12px;background:linear-gradient(90deg,#30ecf0 0.00% 25.00%,#90eef4 25.00% 50.00%,#12aab4 50.00% 75.00%,#02929a 75.00% 100.00%)"></i>
<i style="left:488px;top:761px;width:4px;height:1px;background:linear-gradient(90deg,#008a2a 0.00% 25.00%,#36b090 25.00% 50.00%,#16745a 50.00% 75.00%,#03472a 75.00% 100.00%)"></i>
<b class="t11" style="left:184.0px;top:767px;width:600px;text-align:center;transform:scaleX(1.1431992337164751);transform-origin:50% 0">01</b>
<b class="t9" style="left:184.0px;top:779px;width:600px;text-align:center;transform:scaleX(1.0342041475895503);transform-origin:50% 0">Mai</b>
<i style="left:496px;top:749px;width:4px;height:13px;background:linear-gradient(90deg,#d8c868 0.00% 25.00%,#f0e4a0 25.00% 50.00%,#d8cc8c 50.00% 75.00%,#c8a818 75.00% 100.00%)"></i>
<i style="left:500px;top:755px;width:4px;height:7px;background:linear-gradient(90deg,#1050ff 0.00% 25.00%,#90b0f8 25.00% 50.00%,#4060c8 50.00% 75.00%,#062494 75.00% 100.00%)"></i>
<i style="left:504px;top:743px;width:4px;height:19px;background:linear-gradient(90deg,#30ecf0 0.00% 25.00%,#90eef4 25.00% 50.00%,#12aab4 50.00% 75.00%,#02929a 75.00% 100.00%)"></i>
<i style="left:508px;top:761px;width:4px;height:1px;background:linear-gradient(90deg,#008a2a 0.00% 25.00%,#36b090 25.00% 50.00%,#16745a 50.00% 75.00%,#03472a 75.00% 100.00%)"></i>
<b class="t11" style="left:204.0px;top:767px;width:600px;text-align:center;transform:scaleX(1.1431992337164751);transform-origin:50% 0">02</b>
<b class="t9" style="left:204.0px;top:779px;width:600px;text-align:center;transform:scaleX(1.0342041475895503);transform-origin:50% 0">Mai</b>
<i style="left:515px;top:765px;width:18px;height:25px;background:#EAEAEA"></i>
<i style="left:516px;top:755px;width:4px;height:7px;background:linear-gradient(90deg,#d8c868 0.00% 25.00%,#f0e4a0 25.00% 50.00%,#d8cc8c 50.00% 75.00%,#c8a818 75.00% 100.00%)"></i>
<i style="left:520px;top:758px;width:4px;height:4px;background:linear-gradient(90deg,#1050ff 0.00% 25.00%,#90b0f8 25.00% 50.00%,#4060c8 50.00% 75.00%,#062494 75.00% 100.00%)"></i>
<i style="left:524px;top:742px;width:4px;height:20px;background:linear-gradient(90deg,#30ecf0 0.00% 25.00%,#90eef4 25.00% 50.00%,#12aab4 50.00% 75.00%,#02929a 75.00% 100.00%)"></i>
<i style="left:528px;top:760px;width:4px;height:2px;background:linear-gradient(90deg,#008a2a 0.00% 25.00%,#36b090 25.00% 50.00%,#16745a 50.00% 75.00%,#03472a 75.00% 100.00%)"></i>
<b class="t11" style="left:224.0px;top:767px;width:600px;text-align:center;transform:scaleX(1.1431992337164751);transform-origin:50% 0">03</b>
<b class="t9" style="left:224.0px;top:779px;width:600px;text-align:center;transform:scaleX(1.0342041475895503);transform-origin:50% 0">Mai</b>
<i style="left:535px;top:765px;width:18px;height:25px;background:#EAEAEA"></i>
<i style="left:536px;top:749px;width:4px;height:13px;background:linear-gradient(90deg,#d8c868 0.00% 25.00%,#f0e4a0 25.00% 50.00%,#d8cc8c 50.00% 75.00%,#c8a818 75.00% 100.00%)"></i>
<i style="left:540px;top:753px;width:4px;height:9px;background:linear-gradient(90deg,#1050ff 0.00% 25.00%,#90b0f8 25.00% 50.00%,#4060c8 50.00% 75.00%,#062494 75.00% 100.00%)"></i>
<i style="left:544px;top:750px;width:4px;height:12px;background:linear-gradient(90deg,#30ecf0 0.00% 25.00%,#90eef4 25.00% 50.00%,#12aab4 50.00% 75.00%,#02929a 75.00% 100.00%)"></i>
<i style="left:548px;top:761px;width:4px;height:1px;background:linear-gradient(90deg,#008a2a 0.00% 25.00%,#36b090 25.00% 50.00%,#16745a 50.00% 75.00%,#03472a 75.00% 100.00%)"></i>
<b class="t11" style="left:244.0px;top:767px;width:600px;text-align:center;transform:scaleX(1.1431992337164751);transform-origin:50% 0">04</b>
<b class="t9" style="left:244.0px;top:779px;width:600px;text-align:center;transform:scaleX(1.0342041475895503);transform-origin:50% 0">Mai</b>
<i style="left:556px;top:753px;width:4px;height:9px;background:linear-gradient(90deg,#d8c868 0.00% 25.00%,#f0e4a0 25.00% 50.00%,#d8cc8c 50.00% 75.00%,#c8a818 75.00% 100.00%)"></i>
<i style="left:560px;top:718px;width:4px;height:44px;background:linear-gradient(90deg,#1050ff 0.00% 25.00%,#90b0f8 25.00% 50.00%,#4060c8 50.00% 75.00%,#062494 75.00% 100.00%)"></i>
<i style="left:564px;top:694px;width:4px;height:68px;background:linear-gradient(90deg,#30ecf0 0.00% 25.00%,#90eef4 25.00% 50.00%,#12aab4 50.00% 75.00%,#02929a 75.00% 100.00%)"></i>
<i style="left:568px;top:742px;width:4px;height:20px;background:linear-gradient(90deg,#008a2a 0.00% 25.00%,#36b090 25.00% 50.00%,#16745a 50.00% 75.00%,#03472a 75.00% 100.00%)"></i>
<b class="t11" style="left:264.0px;top:767px;width:600px;text-align:center;transform:scaleX(1.1431992337164751);transform-origin:50% 0">05</b>
<b class="t9" style="left:264.0px;top:779px;width:600px;text-align:center;transform:scaleX(1.0342041475895503);transform-origin:50% 0">Mai</b>
<i style="left:576px;top:754px;width:4px;height:8px;background:linear-gradient(90deg,#d8c868 0.00% 25.00%,#f0e4a0 25.00% 50.00%,#d8cc8c 50.00% 75.00%,#c8a818 75.00% 100.00%)"></i>
<i style="left:580px;top:717px;width:4px;height:45px;background:linear-gradient(90deg,#1050ff 0.00% 25.00%,#90b0f8 25.00% 50.00%,#4060c8 50.00% 75.00%,#062494 75.00% 100.00%)"></i>
<i style="left:584px;top:689px;width:4px;height:73px;background:linear-gradient(90deg,#30ecf0 0.00% 25.00%,#90eef4 25.00% 50.00%,#12aab4 50.00% 75.00%,#02929a 75.00% 100.00%)"></i>
<i style="left:588px;top:760px;width:4px;height:2px;background:linear-gradient(90deg,#008a2a 0.00% 25.00%,#36b090 25.00% 50.00%,#16745a 50.00% 75.00%,#03472a 75.00% 100.00%)"></i>
<b class="t11" style="left:284.0px;top:767px;width:600px;text-align:center;transform:scaleX(1.1431992337164751);transform-origin:50% 0">06</b>
<b class="t9" style="left:284.0px;top:779px;width:600px;text-align:center;transform:scaleX(1.0342041475895503);transform-origin:50% 0">Mai</b>
<i style="left:596px;top:749px;width:4px;height:13px;background:linear-gradient(90deg,#d8c868 0.00% 25.00%,#f0e4a0 25.00% 50.00%,#d8cc8c 50.00% 75.00%,#c8a818 75.00% 100.00%)"></i>
<i style="left:600px;top:754px;width:4px;height:8px;background:linear-gradient(90deg,#1050ff 0.00% 25.00%,#90b0f8 25.00% 50.00%,#4060c8 50.00% 75.00%,#062494 75.00% 100.00%)"></i>
<i style="left:604px;top:747px;width:4px;height:15px;background:linear-gradient(90deg,#30ecf0 0.00% 25.00%,#90eef4 25.00% 50.00%,#12aab4 50.00% 75.00%,#02929a 75.00% 100.00%)"></i>
<i style="left:608px;top:761px;width:4px;height:1px;background:linear-gradient(90deg,#008a2a 0.00% 25.00%,#36b090 25.00% 50.00%,#16745a 50.00% 75.00%,#03472a 75.00% 100.00%)"></i>
<b class="t11" style="left:304.0px;top:767px;width:600px;text-align:center;transform:scaleX(1.1431992337164751);transform-origin:50% 0">07</b>
<b class="t9" style="left:304.0px;top:779px;width:600px;text-align:center;transform:scaleX(1.0342041475895503);transform-origin:50% 0">Mai</b>
<i style="left:616px;top:757px;width:4px;height:5px;background:linear-gradient(90deg,#d8c868 0.00% 25.00%,#f0e4a0 25.00% 50.00%,#d8cc8c 50.00% 75.00%,#c8a818 75.00% 100.00%)"></i>
<i style="left:620px;top:759px;width:4px;height:3px;background:linear-gradient(90deg,#1050ff 0.00% 25.00%,#90b0f8 25.00% 50.00%,#4060c8 50.00% 75.00%,#062494 75.00% 100.00%)"></i>
<i style="left:624px;top:758px;width:4px;height:4px;background:linear-gradient(90deg,#30ecf0 0.00% 25.00%,#90eef4 25.00% 50.00%,#12aab4 50.00% 75.00%,#02929a 75.00% 100.00%)"></i>
<i style="left:628px;top:761px;width:4px;height:1px;background:linear-gradient(90deg,#008a2a 0.00% 25.00%,#36b090 25.00% 50.00%,#16745a 50.00% 75.00%,#03472a 75.00% 100.00%)"></i>
<b class="t11" style="left:324.0px;top:767px;width:600px;text-align:center;transform:scaleX(1.1431992337164751);transform-origin:50% 0">08</b>
<b class="t9" style="left:324.0px;top:779px;width:600px;text-align:center;transform:scaleX(1.0342041475895503);transform-origin:50% 0">Mai</b>
<i style="left:636px;top:751px;width:4px;height:11px;background:linear-gradient(90deg,#d8c868 0.00% 25.00%,#f0e4a0 25.00% 50.00%,#d8cc8c 50.00% 75.00%,#c8a818 75.00% 100.00%)"></i>
<i style="left:640px;top:750px;width:4px;height:12px;background:linear-gradient(90deg,#1050ff 0.00% 25.00%,#90b0f8 25.00% 50.00%,#4060c8 50.00% 75.00%,#062494 75.00% 100.00%)"></i>
<i style="left:644px;top:741px;width:4px;height:21px;background:linear-gradient(90deg,#30ecf0 0.00% 25.00%,#90eef4 25.00% 50.00%,#12aab4 50.00% 75.00%,#02929a 75.00% 100.00%)"></i>
<i style="left:648px;top:760px;width:4px;height:2px;background:linear-gradient(90deg,#008a2a 0.00% 25.00%,#36b090 25.00% 50.00%,#16745a 50.00% 75.00%,#03472a 75.00% 100.00%)"></i>
<b class="t11" style="left:344.0px;top:767px;width:600px;text-align:center;transform:scaleX(1.1431992337164751);transform-origin:50% 0">09</b>
<b class="t9" style="left:344.0px;top:779px;width:600px;text-align:center;transform:scaleX(1.0342041475895503);transform-origin:50% 0">Mai</b>
<i style="left:655px;top:765px;width:18px;height:25px;background:#EAEAEA"></i>
<i style="left:656px;top:757px;width:4px;height:5px;background:linear-gradient(90deg,#d8c868 0.00% 25.00%,#f0e4a0 25.00% 50.00%,#d8cc8c 50.00% 75.00%,#c8a818 75.00% 100.00%)"></i>
<i style="left:660px;top:758px;width:4px;height:4px;background:linear-gradient(90deg,#1050ff 0.00% 25.00%,#90b0f8 25.00% 50.00%,#4060c8 50.00% 75.00%,#062494 75.00% 100.00%)"></i>
<i style="left:664px;top:754px;width:4px;height:8px;background:linear-gradient(90deg,#30ecf0 0.00% 25.00%,#90eef4 25.00% 50.00%,#12aab4 50.00% 75.00%,#02929a 75.00% 100.00%)"></i>
<i style="left:668px;top:760px;width:4px;height:2px;background:linear-gradient(90deg,#008a2a 0.00% 25.00%,#36b090 25.00% 50.00%,#16745a 50.00% 75.00%,#03472a 75.00% 100.00%)"></i>
<b class="t11" style="left:364.0px;top:767px;width:600px;text-align:center;transform:scaleX(1.1431992337164751);transform-origin:50% 0">10</b>
<b class="t9" style="left:364.0px;top:779px;width:600px;text-align:center;transform:scaleX(1.0342041475895503);transform-origin:50% 0">Mai</b>
<i style="left:675px;top:765px;width:18px;height:25px;background:#EAEAEA"></i>
<i style="left:676px;top:756px;width:4px;height:6px;background:linear-gradient(90deg,#d8c868 0.00% 25.00%,#f0e4a0 25.00% 50.00%,#d8cc8c 50.00% 75.00%,#c8a818 75.00% 100.00%)"></i>
<i style="left:680px;top:753px;width:4px;height:9px;background:linear-gradient(90deg,#1050ff 0.00% 25.00%,#90b0f8 25.00% 50.00%,#4060c8 50.00% 75.00%,#062494 75.00% 100.00%)"></i>
<i style="left:684px;top:735px;width:4px;height:27px;background:linear-gradient(90deg,#30ecf0 0.00% 25.00%,#90eef4 25.00% 50.00%,#12aab4 50.00% 75.00%,#02929a 75.00% 100.00%)"></i>
<i style="left:688px;top:759px;width:4px;height:3px;background:linear-gradient(90deg,#008a2a 0.00% 25.00%,#36b090 25.00% 50.00%,#16745a 50.00% 75.00%,#03472a 75.00% 100.00%)"></i>
<b class="t11" style="left:384.0px;top:767px;width:600px;text-align:center;transform:scaleX(1.224940130003421);transform-origin:50% 0">11</b>
<b class="t9" style="left:384.0px;top:779px;width:600px;text-align:center;transform:scaleX(1.0342041475895503);transform-origin:50% 0">Mai</b>
<i style="left:696px;top:756px;width:4px;height:6px;background:linear-gradient(90deg,#d8c868 0.00% 25.00%,#f0e4a0 25.00% 50.00%,#d8cc8c 50.00% 75.00%,#c8a818 75.00% 100.00%)"></i>
<i style="left:700px;top:758px;width:4px;height:4px;background:linear-gradient(90deg,#1050ff 0.00% 25.00%,#90b0f8 25.00% 50.00%,#4060c8 50.00% 75.00%,#062494 75.00% 100.00%)"></i>
<i style="left:704px;top:753px;width:4px;height:9px;background:linear-gradient(90deg,#30ecf0 0.00% 25.00%,#90eef4 25.00% 50.00%,#12aab4 50.00% 75.00%,#02929a 75.00% 100.00%)"></i>
<i style="left:708px;top:761px;width:4px;height:1px;background:linear-gradient(90deg,#008a2a 0.00% 25.00%,#36b090 25.00% 50.00%,#16745a 50.00% 75.00%,#03472a 75.00% 100.00%)"></i>
<b class="t11" style="left:404.0px;top:767px;width:600px;text-align:center;transform:scaleX(1.1431992337164751);transform-origin:50% 0">12</b>
<b class="t9" style="left:404.0px;top:779px;width:600px;text-align:center;transform:scaleX(1.0342041475895503);transform-origin:50% 0">Mai</b>
<i style="left:716px;top:756px;width:4px;height:6px;background:linear-gradient(90deg,#d8c868 0.00% 25.00%,#f0e4a0 25.00% 50.00%,#d8cc8c 50.00% 75.00%,#c8a818 75.00% 100.00%)"></i>
<i style="left:720px;top:752px;width:4px;height:10px;background:linear-gradient(90deg,#1050ff 0.00% 25.00%,#90b0f8 25.00% 50.00%,#4060c8 50.00% 75.00%,#062494 75.00% 100.00%)"></i>
<i style="left:724px;top:726px;width:4px;height:36px;background:linear-gradient(90deg,#30ecf0 0.00% 25.00%,#90eef4 25.00% 50.00%,#12aab4 50.00% 75.00%,#02929a 75.00% 100.00%)"></i>
<i style="left:728px;top:749px;width:4px;height:13px;background:linear-gradient(90deg,#008a2a 0.00% 25.00%,#36b090 25.00% 50.00%,#16745a 50.00% 75.00%,#03472a 75.00% 100.00%)"></i>
<b class="t11" style="left:424.0px;top:767px;width:600px;text-align:center;transform:scaleX(1.1431992337164751);transform-origin:50% 0">13</b>
<b class="t9" style="left:424.0px;top:779px;width:600px;text-align:center;transform:scaleX(1.0342041475895503);transform-origin:50% 0">Mai</b>
<i style="left:736px;top:751px;width:4px;height:11px;background:linear-gradient(90deg,#d8c868 0.00% 25.00%,#f0e4a0 25.00% 50.00%,#d8cc8c 50.00% 75.00%,#c8a818 75.00% 100.00%)"></i>
<i style="left:740px;top:748px;width:4px;height:14px;background:linear-gradient(90deg,#1050ff 0.00% 25.00%,#90b0f8 25.00% 50.00%,#4060c8 50.00% 75.00%,#062494 75.00% 100.00%)"></i>
<i style="left:744px;top:741px;width:4px;height:21px;background:linear-gradient(90deg,#30ecf0 0.00% 25.00%,#90eef4 25.00% 50.00%,#12aab4 50.00% 75.00%,#02929a 75.00% 100.00%)"></i>
<i style="left:748px;top:760px;width:4px;height:2px;background:linear-gradient(90deg,#008a2a 0.00% 25.00%,#36b090 25.00% 50.00%,#16745a 50.00% 75.00%,#03472a 75.00% 100.00%)"></i>
<b class="t11" style="left:444.0px;top:767px;width:600px;text-align:center;transform:scaleX(1.1431992337164751);transform-origin:50% 0">14</b>
<b class="t9" style="left:444.0px;top:779px;width:600px;text-align:center;transform:scaleX(1.0342041475895503);transform-origin:50% 0">Mai</b>
<i style="left:756px;top:752px;width:4px;height:10px;background:linear-gradient(90deg,#d8c868 0.00% 25.00%,#f0e4a0 25.00% 50.00%,#d8cc8c 50.00% 75.00%,#c8a818 75.00% 100.00%)"></i>
<i style="left:760px;top:749px;width:4px;height:13px;background:linear-gradient(90deg,#1050ff 0.00% 25.00%,#90b0f8 25.00% 50.00%,#4060c8 50.00% 75.00%,#062494 75.00% 100.00%)"></i>
<i style="left:764px;top:719px;width:4px;height:43px;background:linear-gradient(90deg,#30ecf0 0.00% 25.00%,#90eef4 25.00% 50.00%,#12aab4 50.00% 75.00%,#02929a 75.00% 100.00%)"></i>
<i style="left:768px;top:740px;width:4px;height:22px;background:linear-gradient(90deg,#008a2a 0.00% 25.00%,#36b090 25.00% 50.00%,#16745a 50.00% 75.00%,#03472a 75.00% 100.00%)"></i>
<b class="t11" style="left:464.0px;top:767px;width:600px;text-align:center;transform:scaleX(1.1431992337164751);transform-origin:50% 0">15</b>
<b class="t9" style="left:464.0px;top:779px;width:600px;text-align:center;transform:scaleX(1.0342041475895503);transform-origin:50% 0">Mai</b>
<i style="left:776px;top:755px;width:4px;height:7px;background:linear-gradient(90deg,#d8c868 0.00% 25.00%,#f0e4a0 25.00% 50.00%,#d8cc8c 50.00% 75.00%,#c8a818 75.00% 100.00%)"></i>
<i style="left:780px;top:755px;width:4px;height:7px;background:linear-gradient(90deg,#1050ff 0.00% 25.00%,#90b0f8 25.00% 50.00%,#4060c8 50.00% 75.00%,#062494 75.00% 100.00%)"></i>
<i style="left:784px;top:746px;width:4px;height:16px;background:linear-gradient(90deg,#30ecf0 0.00% 25.00%,#90eef4 25.00% 50.00%,#12aab4 50.00% 75.00%,#02929a 75.00% 100.00%)"></i>
<i style="left:788px;top:761px;width:4px;height:1px;background:linear-gradient(90deg,#008a2a 0.00% 25.00%,#36b090 25.00% 50.00%,#16745a 50.00% 75.00%,#03472a 75.00% 100.00%)"></i>
<b class="t11" style="left:484.0px;top:767px;width:600px;text-align:center;transform:scaleX(1.1431992337164751);transform-origin:50% 0">16</b>
<b class="t9" style="left:484.0px;top:779px;width:600px;text-align:center;transform:scaleX(1.0342041475895503);transform-origin:50% 0">Mai</b>
<i style="left:795px;top:765px;width:18px;height:25px;background:#EAEAEA"></i>
<i style="left:796px;top:755px;width:4px;height:7px;background:linear-gradient(90deg,#d8c868 0.00% 25.00%,#f0e4a0 25.00% 50.00%,#d8cc8c 50.00% 75.00%,#c8a818 75.00% 100.00%)"></i>
<i style="left:800px;top:754px;width:4px;height:8px;background:linear-gradient(90deg,#1050ff 0.00% 25.00%,#90b0f8 25.00% 50.00%,#4060c8 50.00% 75.00%,#062494 75.00% 100.00%)"></i>
<i style="left:804px;top:731px;width:4px;height:31px;background:linear-gradient(90deg,#30ecf0 0.00% 25.00%,#90eef4 25.00% 50.00%,#12aab4 50.00% 75.00%,#02929a 75.00% 100.00%)"></i>
<i style="left:808px;top:759px;width:4px;height:3px;background:linear-gradient(90deg,#008a2a 0.00% 25.00%,#36b090 25.00% 50.00%,#16745a 50.00% 75.00%,#03472a 75.00% 100.00%)"></i>
<b class="t11" style="left:504.0px;top:767px;width:600px;text-align:center;transform:scaleX(1.1431992337164751);transform-origin:50% 0">17</b>
<b class="t9" style="left:504.0px;top:779px;width:600px;text-align:center;transform:scaleX(1.0342041475895503);transform-origin:50% 0">Mai</b>
<i style="left:815px;top:765px;width:18px;height:25px;background:#EAEAEA"></i>
<i style="left:816px;top:748px;width:4px;height:14px;background:linear-gradient(90deg,#d8c868 0.00% 25.00%,#f0e4a0 25.00% 50.00%,#d8cc8c 50.00% 75.00%,#c8a818 75.00% 100.00%)"></i>
<i style="left:820px;top:750px;width:4px;height:12px;background:linear-gradient(90deg,#1050ff 0.00% 25.00%,#90b0f8 25.00% 50.00%,#4060c8 50.00% 75.00%,#062494 75.00% 100.00%)"></i>
<i style="left:824px;top:716px;width:4px;height:46px;background:linear-gradient(90deg,#30ecf0 0.00% 25.00%,#90eef4 25.00% 50.00%,#12aab4 50.00% 75.00%,#02929a 75.00% 100.00%)"></i>
<i style="left:828px;top:748px;width:4px;height:14px;background:linear-gradient(90deg,#008a2a 0.00% 25.00%,#36b090 25.00% 50.00%,#16745a 50.00% 75.00%,#03472a 75.00% 100.00%)"></i>
<b class="t11" style="left:524.0px;top:767px;width:600px;text-align:center;transform:scaleX(1.1431992337164751);transform-origin:50% 0">18</b>
<b class="t9" style="left:524.0px;top:779px;width:600px;text-align:center;transform:scaleX(1.0342041475895503);transform-origin:50% 0">Mai</b>
<i style="left:836px;top:749px;width:4px;height:13px;background:linear-gradient(90deg,#d8c868 0.00% 25.00%,#f0e4a0 25.00% 50.00%,#d8cc8c 50.00% 75.00%,#c8a818 75.00% 100.00%)"></i>
<i style="left:840px;top:746px;width:4px;height:16px;background:linear-gradient(90deg,#1050ff 0.00% 25.00%,#90b0f8 25.00% 50.00%,#4060c8 50.00% 75.00%,#062494 75.00% 100.00%)"></i>
<i style="left:844px;top:681px;width:4px;height:81px;background:linear-gradient(90deg,#30ecf0 0.00% 25.00%,#90eef4 25.00% 50.00%,#12aab4 50.00% 75.00%,#02929a 75.00% 100.00%)"></i>
<i style="left:848px;top:671px;width:4px;height:91px;background:linear-gradient(90deg,#008a2a 0.00% 25.00%,#36b090 25.00% 50.00%,#16745a 50.00% 75.00%,#03472a 75.00% 100.00%)"></i>
<b class="t11" style="left:544.0px;top:767px;width:600px;text-align:center;transform:scaleX(1.1431992337164751);transform-origin:50% 0">19</b>
<b class="t9" style="left:544.0px;top:779px;width:600px;text-align:center;transform:scaleX(1.0342041475895503);transform-origin:50% 0">Mai</b>
<i style="left:856px;top:751px;width:4px;height:11px;background:linear-gradient(90deg,#d8c868 0.00% 25.00%,#f0e4a0 25.00% 50.00%,#d8cc8c 50.00% 75.00%,#c8a818 75.00% 100.00%)"></i>
<i style="left:860px;top:719px;width:4px;height:43px;background:linear-gradient(90deg,#1050ff 0.00% 25.00%,#90b0f8 25.00% 50.00%,#4060c8 50.00% 75.00%,#062494 75.00% 100.00%)"></i>
<i style="left:864px;top:671px;width:4px;height:91px;background:linear-gradient(90deg,#30ecf0 0.00% 25.00%,#90eef4 25.00% 50.00%,#12aab4 50.00% 75.00%,#02929a 75.00% 100.00%)"></i>
<i style="left:868px;top:722px;width:4px;height:40px;background:linear-gradient(90deg,#008a2a 0.00% 25.00%,#36b090 25.00% 50.00%,#16745a 50.00% 75.00%,#03472a 75.00% 100.00%)"></i>
<b class="t11" style="left:564.0px;top:767px;width:600px;text-align:center;transform:scaleX(1.1431992337164751);transform-origin:50% 0">20</b>
<b class="t9" style="left:564.0px;top:779px;width:600px;text-align:center;transform:scaleX(1.0342041475895503);transform-origin:50% 0">Mai</b>
<i style="left:876px;top:749px;width:4px;height:13px;background:linear-gradient(90deg,#d8c868 0.00% 25.00%,#f0e4a0 25.00% 50.00%,#d8cc8c 50.00% 75.00%,#c8a818 75.00% 100.00%)"></i>
<i style="left:880px;top:753px;width:4px;height:9px;background:linear-gradient(90deg,#1050ff 0.00% 25.00%,#90b0f8 25.00% 50.00%,#4060c8 50.00% 75.00%,#062494 75.00% 100.00%)"></i>
<i style="left:884px;top:725px;width:4px;height:37px;background:linear-gradient(90deg,#30ecf0 0.00% 25.00%,#90eef4 25.00% 50.00%,#12aab4 50.00% 75.00%,#02929a 75.00% 100.00%)"></i>
<i style="left:888px;top:746px;width:4px;height:16px;background:linear-gradient(90deg,#008a2a 0.00% 25.00%,#36b090 25.00% 50.00%,#16745a 50.00% 75.00%,#03472a 75.00% 100.00%)"></i>
<b class="t11" style="left:584.0px;top:767px;width:600px;text-align:center;transform:scaleX(1.1431992337164751);transform-origin:50% 0">21</b>
<b class="t9" style="left:584.0px;top:779px;width:600px;text-align:center;transform:scaleX(1.0342041475895503);transform-origin:50% 0">Mai</b>
<i style="left:896px;top:755px;width:4px;height:7px;background:linear-gradient(90deg,#d8c868 0.00% 25.00%,#f0e4a0 25.00% 50.00%,#d8cc8c 50.00% 75.00%,#c8a818 75.00% 100.00%)"></i>
<i style="left:900px;top:757px;width:4px;height:5px;background:linear-gradient(90deg,#1050ff 0.00% 25.00%,#90b0f8 25.00% 50.00%,#4060c8 50.00% 75.00%,#062494 75.00% 100.00%)"></i>
<i style="left:904px;top:754px;width:4px;height:8px;background:linear-gradient(90deg,#30ecf0 0.00% 25.00%,#90eef4 25.00% 50.00%,#12aab4 50.00% 75.00%,#02929a 75.00% 100.00%)"></i>
<i style="left:908px;top:761px;width:4px;height:1px;background:linear-gradient(90deg,#008a2a 0.00% 25.00%,#36b090 25.00% 50.00%,#16745a 50.00% 75.00%,#03472a 75.00% 100.00%)"></i>
<b class="t11" style="left:604.0px;top:767px;width:600px;text-align:center;transform:scaleX(1.1431992337164751);transform-origin:50% 0">22</b>
<b class="t9" style="left:604.0px;top:779px;width:600px;text-align:center;transform:scaleX(1.0342041475895503);transform-origin:50% 0">Mai</b>
<i style="left:916px;top:754px;width:4px;height:8px;background:linear-gradient(90deg,#d8c868 0.00% 25.00%,#f0e4a0 25.00% 50.00%,#d8cc8c 50.00% 75.00%,#c8a818 75.00% 100.00%)"></i>
<i style="left:920px;top:757px;width:4px;height:5px;background:linear-gradient(90deg,#1050ff 0.00% 25.00%,#90b0f8 25.00% 50.00%,#4060c8 50.00% 75.00%,#062494 75.00% 100.00%)"></i>
<i style="left:924px;top:744px;width:4px;height:18px;background:linear-gradient(90deg,#30ecf0 0.00% 25.00%,#90eef4 25.00% 50.00%,#12aab4 50.00% 75.00%,#02929a 75.00% 100.00%)"></i>
<i style="left:928px;top:756px;width:4px;height:6px;background:linear-gradient(90deg,#008a2a 0.00% 25.00%,#36b090 25.00% 50.00%,#16745a 50.00% 75.00%,#03472a 75.00% 100.00%)"></i>
<b class="t11" style="left:624.0px;top:767px;width:600px;text-align:center;transform:scaleX(1.1431992337164751);transform-origin:50% 0">23</b>
<b class="t9" style="left:624.0px;top:779px;width:600px;text-align:center;transform:scaleX(1.0342041475895503);transform-origin:50% 0">Mai</b>
<i style="left:935px;top:765px;width:18px;height:25px;background:#EAEAEA"></i>
<i style="left:936px;top:754px;width:4px;height:8px;background:linear-gradient(90deg,#d8c868 0.00% 25.00%,#f0e4a0 25.00% 50.00%,#d8cc8c 50.00% 75.00%,#c8a818 75.00% 100.00%)"></i>
<i style="left:940px;top:754px;width:4px;height:8px;background:linear-gradient(90deg,#1050ff 0.00% 25.00%,#90b0f8 25.00% 50.00%,#4060c8 50.00% 75.00%,#062494 75.00% 100.00%)"></i>
<i style="left:944px;top:749px;width:4px;height:13px;background:linear-gradient(90deg,#30ecf0 0.00% 25.00%,#90eef4 25.00% 50.00%,#12aab4 50.00% 75.00%,#02929a 75.00% 100.00%)"></i>
<i style="left:948px;top:753px;width:4px;height:9px;background:linear-gradient(90deg,#008a2a 0.00% 25.00%,#36b090 25.00% 50.00%,#16745a 50.00% 75.00%,#03472a 75.00% 100.00%)"></i>
<b class="t11" style="left:644.0px;top:767px;width:600px;text-align:center;transform:scaleX(1.1431992337164751);transform-origin:50% 0">24</b>
<b class="t9" style="left:644.0px;top:779px;width:600px;text-align:center;transform:scaleX(1.0342041475895503);transform-origin:50% 0">Mai</b>
<i style="left:955px;top:765px;width:18px;height:25px;background:#EAEAEA"></i>
<i style="left:956px;top:753px;width:4px;height:9px;background:linear-gradient(90deg,#d8c868 0.00% 25.00%,#f0e4a0 25.00% 50.00%,#d8cc8c 50.00% 75.00%,#c8a818 75.00% 100.00%)"></i>
<i style="left:960px;top:715px;width:4px;height:47px;background:linear-gradient(90deg,#1050ff 0.00% 25.00%,#90b0f8 25.00% 50.00%,#4060c8 50.00% 75.00%,#062494 75.00% 100.00%)"></i>
<i style="left:964px;top:712px;width:4px;height:50px;background:linear-gradient(90deg,#30ecf0 0.00% 25.00%,#90eef4 25.00% 50.00%,#12aab4 50.00% 75.00%,#02929a 75.00% 100.00%)"></i>
<i style="left:968px;top:761px;width:4px;height:1px;background:linear-gradient(90deg,#008a2a 0.00% 25.00%,#36b090 25.00% 50.00%,#16745a 50.00% 75.00%,#03472a 75.00% 100.00%)"></i>
<b class="t11" style="left:664.0px;top:767px;width:600px;text-align:center;transform:scaleX(1.1431992337164751);transform-origin:50% 0">25</b>
<b class="t9" style="left:664.0px;top:779px;width:600px;text-align:center;transform:scaleX(1.0342041475895503);transform-origin:50% 0">Mai</b>
<i style="left:976px;top:749px;width:4px;height:13px;background:linear-gradient(90deg,#d8c868 0.00% 25.00%,#f0e4a0 25.00% 50.00%,#d8cc8c 50.00% 75.00%,#c8a818 75.00% 100.00%)"></i>
<i style="left:980px;top:755px;width:4px;height:7px;background:linear-gradient(90deg,#1050ff 0.00% 25.00%,#90b0f8 25.00% 50.00%,#4060c8 50.00% 75.00%,#062494 75.00% 100.00%)"></i>
<i style="left:984px;top:747px;width:4px;height:15px;background:linear-gradient(90deg,#30ecf0 0.00% 25.00%,#90eef4 25.00% 50.00%,#12aab4 50.00% 75.00%,#02929a 75.00% 100.00%)"></i>
<i style="left:988px;top:761px;width:4px;height:1px;background:linear-gradient(90deg,#008a2a 0.00% 25.00%,#36b090 25.00% 50.00%,#16745a 50.00% 75.00%,#03472a 75.00% 100.00%)"></i>
<b class="t11" style="left:684.0px;top:767px;width:600px;text-align:center;transform:scaleX(1.1431992337164751);transform-origin:50% 0">26</b>
<b class="t9" style="left:684.0px;top:779px;width:600px;text-align:center;transform:scaleX(1.0342041475895503);transform-origin:50% 0">Mai</b>
<i style="left:996px;top:748px;width:4px;height:14px;background:linear-gradient(90deg,#d8c868 0.00% 25.00%,#f0e4a0 25.00% 50.00%,#d8cc8c 50.00% 75.00%,#c8a818 75.00% 100.00%)"></i>
<i style="left:1000px;top:753px;width:4px;height:9px;background:linear-gradient(90deg,#1050ff 0.00% 25.00%,#90b0f8 25.00% 50.00%,#4060c8 50.00% 75.00%,#062494 75.00% 100.00%)"></i>
<i style="left:1004px;top:741px;width:4px;height:21px;background:linear-gradient(90deg,#30ecf0 0.00% 25.00%,#90eef4 25.00% 50.00%,#12aab4 50.00% 75.00%,#02929a 75.00% 100.00%)"></i>
<i style="left:1008px;top:760px;width:4px;height:2px;background:linear-gradient(90deg,#008a2a 0.00% 25.00%,#36b090 25.00% 50.00%,#16745a 50.00% 75.00%,#03472a 75.00% 100.00%)"></i>
<b class="t11" style="left:704.0px;top:767px;width:600px;text-align:center;transform:scaleX(1.1431992337164751);transform-origin:50% 0">27</b>
<b class="t9" style="left:704.0px;top:779px;width:600px;text-align:center;transform:scaleX(1.0342041475895503);transform-origin:50% 0">Mai</b>
<i style="left:1016px;top:737px;width:4px;height:25px;background:linear-gradient(90deg,#d8c868 0.00% 25.00%,#f0e4a0 25.00% 50.00%,#d8cc8c 50.00% 75.00%,#c8a818 75.00% 100.00%)"></i>
<i style="left:1020px;top:743px;width:4px;height:19px;background:linear-gradient(90deg,#1050ff 0.00% 25.00%,#90b0f8 25.00% 50.00%,#4060c8 50.00% 75.00%,#062494 75.00% 100.00%)"></i>
<i style="left:1024px;top:697px;width:4px;height:65px;background:linear-gradient(90deg,#30ecf0 0.00% 25.00%,#90eef4 25.00% 50.00%,#12aab4 50.00% 75.00%,#02929a 75.00% 100.00%)"></i>
<i style="left:1028px;top:714px;width:4px;height:48px;background:linear-gradient(90deg,#008a2a 0.00% 25.00%,#36b090 25.00% 50.00%,#16745a 50.00% 75.00%,#03472a 75.00% 100.00%)"></i>
<b class="t11" style="left:724.0px;top:767px;width:600px;text-align:center;transform:scaleX(1.1431992337164751);transform-origin:50% 0">28</b>
<b class="t9" style="left:724.0px;top:779px;width:600px;text-align:center;transform:scaleX(1.0342041475895503);transform-origin:50% 0">Mai</b>
<i style="left:1036px;top:732px;width:4px;height:30px;background:linear-gradient(90deg,#d8c868 0.00% 25.00%,#f0e4a0 25.00% 50.00%,#d8cc8c 50.00% 75.00%,#c8a818 75.00% 100.00%)"></i>
<i style="left:1040px;top:747px;width:4px;height:15px;background:linear-gradient(90deg,#1050ff 0.00% 25.00%,#90b0f8 25.00% 50.00%,#4060c8 50.00% 75.00%,#062494 75.00% 100.00%)"></i>
<i style="left:1044px;top:740px;width:4px;height:22px;background:linear-gradient(90deg,#30ecf0 0.00% 25.00%,#90eef4 25.00% 50.00%,#12aab4 50.00% 75.00%,#02929a 75.00% 100.00%)"></i>
<i style="left:1048px;top:760px;width:4px;height:2px;background:linear-gradient(90deg,#008a2a 0.00% 25.00%,#36b090 25.00% 50.00%,#16745a 50.00% 75.00%,#03472a 75.00% 100.00%)"></i>
<b class="t11" style="left:744.0px;top:767px;width:600px;text-align:center;transform:scaleX(1.1431992337164751);transform-origin:50% 0">29</b>
<b class="t9" style="left:744.0px;top:779px;width:600px;text-align:center;transform:scaleX(1.0342041475895503);transform-origin:50% 0">Mai</b>
<i style="left:1056px;top:731px;width:4px;height:31px;background:linear-gradient(90deg,#d8c868 0.00% 25.00%,#f0e4a0 25.00% 50.00%,#d8cc8c 50.00% 75.00%,#c8a818 75.00% 100.00%)"></i>
<i style="left:1060px;top:719px;width:4px;height:43px;background:linear-gradient(90deg,#1050ff 0.00% 25.00%,#90b0f8 25.00% 50.00%,#4060c8 50.00% 75.00%,#062494 75.00% 100.00%)"></i>
<i style="left:1064px;top:706px;width:4px;height:56px;background:linear-gradient(90deg,#30ecf0 0.00% 25.00%,#90eef4 25.00% 50.00%,#12aab4 50.00% 75.00%,#02929a 75.00% 100.00%)"></i>
<i style="left:1068px;top:759px;width:4px;height:3px;background:linear-gradient(90deg,#008a2a 0.00% 25.00%,#36b090 25.00% 50.00%,#16745a 50.00% 75.00%,#03472a 75.00% 100.00%)"></i>
<b class="t11" style="left:764.0px;top:767px;width:600px;text-align:center;transform:scaleX(1.1431992337164751);transform-origin:50% 0">30</b>
<b class="t9" style="left:764.0px;top:779px;width:600px;text-align:center;transform:scaleX(1.0342041475895503);transform-origin:50% 0">Mai</b>
<i style="left:1075px;top:765px;width:18px;height:25px;background:#EAEAEA"></i>
<i style="left:1076px;top:671px;width:4px;height:91px;background:linear-gradient(90deg,#d8c868 0.00% 25.00%,#f0e4a0 25.00% 50.00%,#d8cc8c 50.00% 75.00%,#c8a818 75.00% 100.00%)"></i>
<i style="left:1080px;top:678px;width:4px;height:84px;background:linear-gradient(90deg,#1050ff 0.00% 25.00%,#90b0f8 25.00% 50.00%,#4060c8 50.00% 75.00%,#062494 75.00% 100.00%)"></i>
<i style="left:1084px;top:676px;width:4px;height:86px;background:linear-gradient(90deg,#30ecf0 0.00% 25.00%,#90eef4 25.00% 50.00%,#12aab4 50.00% 75.00%,#02929a 75.00% 100.00%)"></i>
<i style="left:1088px;top:761px;width:4px;height:1px;background:linear-gradient(90deg,#008a2a 0.00% 25.00%,#36b090 25.00% 50.00%,#16745a 50.00% 75.00%,#03472a 75.00% 100.00%)"></i>
<b class="t11" style="left:784.0px;top:767px;width:600px;text-align:center;transform:scaleX(1.1431992337164751);transform-origin:50% 0">31</b>
<b class="t9" style="left:784.0px;top:779px;width:600px;text-align:center;transform:scaleX(1.0342041475895503);transform-origin:50% 0">Mai</b>
<i style="left:1131px;top:748px;width:4px;height:14px;background:linear-gradient(90deg,#d8c868 0.00% 25.00%,#f0e4a0 25.00% 50.00%,#d8cc8c 50.00% 75.00%,#c8a818 75.00% 100.00%)"></i>
<i style="left:1135px;top:745px;width:4px;height:17px;background:linear-gradient(90deg,#1050ff 0.00% 25.00%,#90b0f8 25.00% 50.00%,#4060c8 50.00% 75.00%,#062494 75.00% 100.00%)"></i>
<i style="left:1139px;top:728px;width:4px;height:34px;background:linear-gradient(90deg,#30ecf0 0.00% 25.00%,#90eef4 25.00% 50.00%,#12aab4 50.00% 75.00%,#02929a 75.00% 100.00%)"></i>
<i style="left:1143px;top:752px;width:4px;height:10px;background:linear-gradient(90deg,#008a2a 0.00% 25.00%,#36b090 25.00% 50.00%,#16745a 50.00% 75.00%,#03472a 75.00% 100.00%)"></i>
<b class="t11" style="left:1104px;top:772px;transform:scaleX(1.1385702875399362);transform-origin:0 0">Durchschnitt</b>
</body></html>
